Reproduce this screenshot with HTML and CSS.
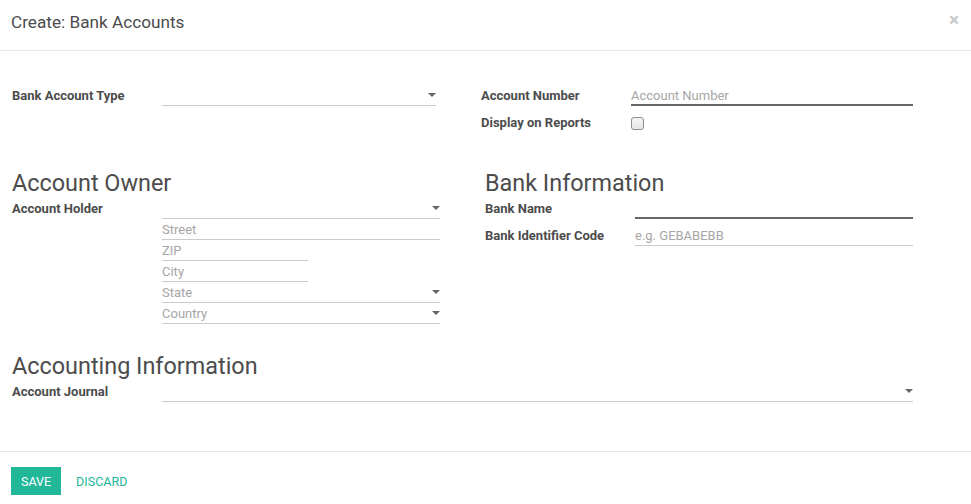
FILE: index.html
```html
<!DOCTYPE html>
<html>
<head>
<meta charset="utf-8">
<link rel="stylesheet" href="styles.css">
</head>
<body>
<div class="modal">
  <header class="modal-header">
    <h4 class="modal-title">Create: Bank Accounts</h4>
    <span class="close">×</span>
  </header>
  <main class="modal-body">
    <section class="group g1">
      <div class="col">
        <div class="row">
          <label class="lbl">Bank Account Type</label>
          <div class="field select"><span class="val"></span><span class="caret"></span></div>
        </div>
      </div>
      <div class="col">
        <div class="row">
          <label class="lbl">Account Number</label>
          <div class="field strong"><span class="ph">Account Number</span></div>
        </div>
        <div class="row">
          <label class="lbl">Display on Reports</label>
          <div class="check-cell"><input type="checkbox" class="chk"></div>
        </div>
      </div>
    </section>

    <section class="group g2">
      <div class="col">
        <h2 class="sep">Account Owner</h2>
        <div class="row">
          <label class="lbl">Account Holder</label>
          <div class="stack">
            <div class="field select"><span class="val"></span><span class="caret"></span></div>
            <div class="field"><span class="ph">Street</span></div>
            <div class="field short"><span class="ph">ZIP</span></div>
            <div class="field short"><span class="ph">City</span></div>
            <div class="field select"><span class="ph">State</span><span class="caret"></span></div>
            <div class="field select"><span class="ph">Country</span><span class="caret"></span></div>
          </div>
        </div>
      </div>
      <div class="col">
        <h2 class="sep">Bank Information</h2>
        <div class="row">
          <label class="lbl">Bank Name</label>
          <div class="field strong"><span class="val"></span></div>
        </div>
        <div class="row">
          <label class="lbl">Bank Identifier Code</label>
          <div class="field"><span class="ph">e.g. GEBABEBB</span></div>
        </div>
      </div>
    </section>

    <section class="group g3">
      <h2 class="sep">Accounting Information</h2>
      <div class="row">
        <label class="lbl">Account Journal</label>
        <div class="field select"><span class="val"></span><span class="caret"></span></div>
      </div>
    </section>
  </main>
  <footer class="modal-footer">
    <button class="btn primary">Save</button>
    <button class="btn link">Discard</button>
  </footer>
</div>
</body>
</html>
```

FILE: styles.css
```css
* { box-sizing: border-box; }
html, body { margin: 0; padding: 0; background: #fff; }
body {
  font-family: Roboto, "Noto Sans", "Liberation Sans", sans-serif;
  font-size: 13px;
  color: #4c4c4c;
  width: 971px;
  height: 504px;
  overflow: hidden;
}
.modal { width: 971px; }
.modal-header {
  height: 51px;
  border-bottom: 1px solid #e5e5e5;
  display: flex;
  align-items: flex-start;
  padding: 11px 12px 0 11px;
}
.modal-title {
  margin: 0;
  font-size: 17.2px;
  font-weight: 400;
  line-height: 23px;
  color: #4c4c4c;
}
.close {
  margin-left: auto;
  font-size: 19px;
  font-weight: 700;
  line-height: 19px;
  color: #c8c8c8;
  margin-top: -1px;
}
.modal-body {
  height: 400px;
  padding: 34px 58px 0 12px;
}
.group { display: grid; }
.g1 { grid-template-columns: 424px 1fr; column-gap: 45px; }
.g2 { grid-template-columns: 428px 1fr; column-gap: 45px; margin-top: 35px; }
.g3 { margin-top: 27px; }
.col { display: flex; flex-direction: column; gap: 6px; }
.g2 .col { gap: 0; }
.g2 .col .row + .row { margin-top: 6px; }
.row {
  display: grid;
  grid-template-columns: 150px 1fr;
  align-items: start;
}
.lbl {
  font-weight: 700;
  line-height: 20px;
  height: 21px;
  padding-top: 1px;
  color: #4c4c4c;
  white-space: nowrap;
}
.sep {
  margin: 0;
  font-size: 23.4px;
  font-weight: 400;
  line-height: 30px;
  color: #4c4c4c;
}
.field {
  height: 21px;
  border-bottom: 1px solid #cccccc;
  display: flex;
  align-items: flex-end;
}
.field.strong { border-bottom: 2px solid #666666; }
.field.strong .ph { margin-bottom: -1px; }
.field.short { width: 146px; }
.stack { display: flex; flex-direction: column; }
.ph { color: #a6a6a6; line-height: 18px; }
.val { flex: 1; }
.select .ph { flex: 1; }
.caret {
  align-self: center;
  width: 0;
  height: 0;
  border-left: 4px solid transparent;
  border-right: 4px solid transparent;
  border-top: 4px solid #666666;
  margin-left: auto;
}
.check-cell { height: 21px; display: flex; align-items: center; padding-top: 1px; }
.chk {
  appearance: none;
  -webkit-appearance: none;
  margin: 0;
  width: 13px;
  height: 13px;
  border: 1px solid #8d8d8d;
  border-radius: 3px;
  background: linear-gradient(#f4f4f4, #e6e6e6);
}
.modal-footer {
  border-top: 1px solid #e5e5e5;
  padding: 15px 11px 0;
  display: flex;
  align-items: center;
}
.btn {
  font-family: Roboto, "Noto Sans", "Liberation Sans", sans-serif;
  font-size: 12.5px;
  text-transform: uppercase;
  border: 0;
  height: 28px;
  line-height: 29px;
  padding: 0 10px;
  background: none;
  cursor: pointer;
}
.btn.primary { background: #21b799; color: #fff; }
.btn.link { color: #21b799; margin-left: 5px; }
```
